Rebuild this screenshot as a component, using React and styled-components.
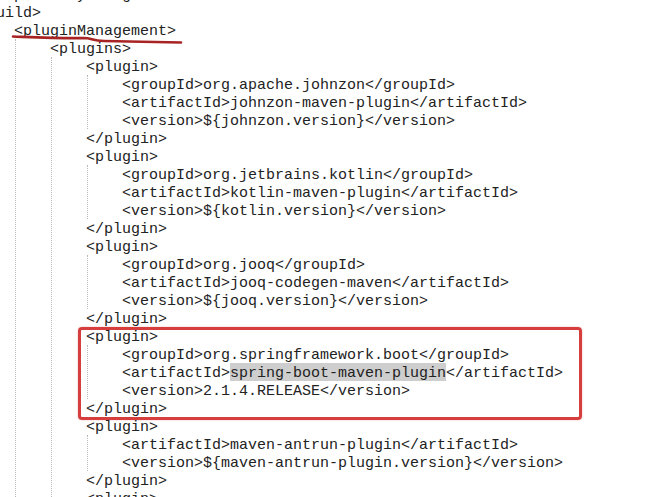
import React from 'react';
import styled, { createGlobalStyle, css } from 'styled-components';

const GlobalStyle = createGlobalStyle`
  html, body {
    margin: 0;
    padding: 0;
    background: #ffffff;
    overflow: hidden;
  }
`;

const Editor = styled.div`
  position: relative;
  width: 645px;
  height: 497px;
  overflow: hidden;
  font-family: "Courier New", "Liberation Mono", monospace;
  font-size: 15px;
  color: #222222;
`;

const Code = styled.div`
  margin: -15px 0 0 -22px;
`;

const Line = styled.div`
  position: relative;
  height: 18px;
  line-height: 21px;
  white-space: pre;
  ${({ $active }) => $active && css`
    &::before {
      content: '';
      position: absolute;
      top: 0;
      bottom: 0;
      left: -400px;
      width: 1400px;
      background: rgb(232, 232, 247);
      z-index: -1;
    }
  `}
`;

const Selected = styled.span`
  display: inline-block;
  height: 18px;
  vertical-align: top;
  background: rgb(206, 206, 206);
`;

const Children = styled.div`
  margin-left: 1px;
  padding-left: 34px;
  border-left: 1px dotted #b9b9b9;
`;

const Block = styled.div`
  position: relative;
  ${({ $marked }) => $marked && css`
    &::after {
      content: '';
      position: absolute;
      top: 0;
      left: -8px;
      width: 504px;
      height: 93px;
      box-sizing: border-box;
      border: 3px solid rgb(214, 62, 62);
      border-radius: 4px;
      box-shadow: 0 0 2px rgba(214, 62, 62, 0.4);
    }
  `}
`;

const Underline = styled.svg`
  position: absolute;
  left: 0;
  top: 0;
  width: 200px;
  height: 50px;
  pointer-events: none;
`;

const Leaf = ({ name, value, active, selected }) => (
  <Line $active={active}>
    {`<${name}>`}
    {selected ? <Selected>{value}</Selected> : value}
    {`</${name}>`}
  </Line>
);

const Element = ({ name, children, marked, open }) => (
  <Block $marked={marked}>
    <Line>{`<${name}>`}</Line>
    <Children>{children}</Children>
    {!open && <Line>{`</${name}>`}</Line>}
  </Block>
);

const plugins = [
  { groupId: 'org.apache.johnzon', artifactId: 'johnzon-maven-plugin', version: '${johnzon.version}' },
  { groupId: 'org.jetbrains.kotlin', artifactId: 'kotlin-maven-plugin', version: '${kotlin.version}' },
  { groupId: 'org.jooq', artifactId: 'jooq-codegen-maven', version: '${jooq.version}' },
  { groupId: 'org.springframework.boot', artifactId: 'spring-boot-maven-plugin', version: '2.1.4.RELEASE', marked: true },
  { artifactId: 'maven-antrun-plugin', version: '${maven-antrun-plugin.version}' },
  { artifactId: 'maven-assembly-plugin', version: '${maven-assembly-plugin.version}' },
];

export default function App() {
  return (
    <Editor>
      <GlobalStyle />
      <Code>
        <Line>{'</dependencyManagement>'}</Line>
        <Element name="build" open>
          <Element name="pluginManagement" open>
            <Element name="plugins" open>
              {plugins.map((p) => (
                <Element key={p.artifactId} name="plugin" marked={p.marked}>
                  {p.groupId && <Leaf name="groupId" value={p.groupId} />}
                  <Leaf
                    name="artifactId"
                    value={p.artifactId}
                    active={p.marked}
                    selected={p.marked}
                  />
                  <Leaf name="version" value={p.version} />
                </Element>
              ))}
            </Element>
          </Element>
        </Element>
      </Code>
      <Underline viewBox="0 0 200 50">
        <path
          d="M13 36.5 C 40 37.5, 62 38.5, 84 38 C 92 38, 92 41, 104 41 C 130 41.5, 160 42, 181 42.5"
          fill="none"
          stroke="rgb(168, 36, 36)"
          strokeWidth="2.6"
          strokeLinecap="round"
        />
      </Underline>
    </Editor>
  );
}
